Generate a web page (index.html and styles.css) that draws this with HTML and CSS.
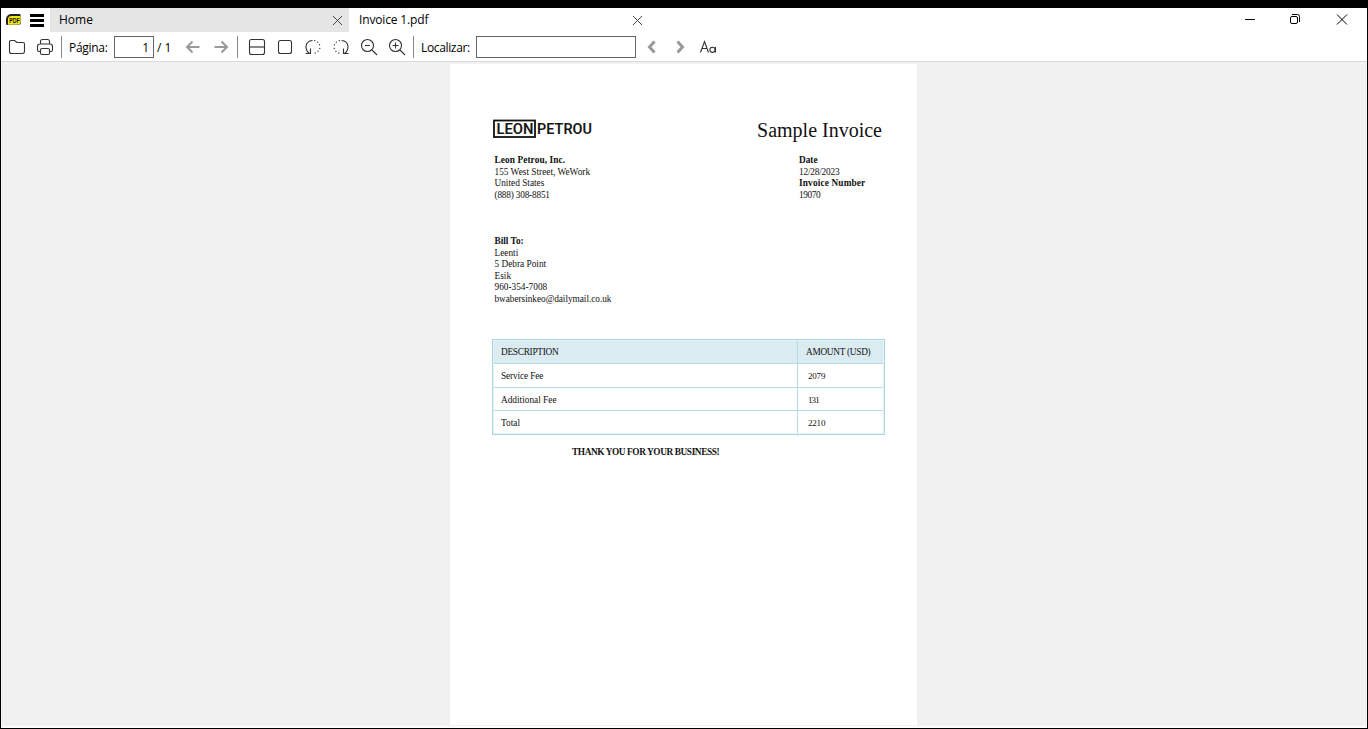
FILE: index.html
```
<!DOCTYPE html>
<html lang="pt">
<head>
<meta charset="utf-8">
<title>Invoice 1.pdf</title>
<link rel="stylesheet" href="styles.css">
</head>
<body>
<div class="window">
  <header class="tabs">
    <svg class="app-logo" width="16" height="12" viewBox="0 0 16 12"><path d="M0 11V5Q1 0 6 0H14L15 1V10Q14 11 12 11H3Z" fill="#777"/><path d="M0 10V5Q1 0 6 0H14V2H6Q2 2 2 6V11Z" fill="#222"/><path d="M2 10.500V5Q2.500 2 5.500 2H14.500V8Q14 10.500 11 10.500Z" fill="#f4e70a"/><text class="logo-pdf" x="3.200" y="9" textLength="10.500" lengthAdjust="spacingAndGlyphs">PDF</text></svg>
    <svg class="burger" width="14" height="13"><path d="M0 1.500H14M0 6.500H14M0 11.500H14" stroke="#000" stroke-width="3"/></svg>
    <div class="tab tab-home"><span class="home-label">Home</span><svg class="x" width="11" height="11"><path d="M1 1L10 10M10 1L1 10" /></svg></div>
    <div class="tab tab-file"><span class="file-label">Invoice 1.pdf</span><svg class="x" width="11" height="11"><path d="M1 1L10 10M10 1L1 10" /></svg></div>
    <div class="controls">
      <svg width="45" height="24"><path d="M17 11.500H27"/></svg>
      <svg width="46" height="24"><rect x="17.500" y="8.500" width="7" height="7" rx="1.500"/><path d="M19 6.500H24.500Q26.500 6.500 26.500 8.500V14"/></svg>
      <svg width="48" height="24"><path d="M18 6.500L28 16.500M28 6.500L18 16.500"/></svg>
    </div>
  </header>
  <nav class="toolbar">
    <svg class="ic" viewBox="0 0 28 28"><path d="M6.500 8.500Q6.500 7.500 8 7.500H11.500L14 9.500H20Q21.500 9.500 21.500 11V18Q21.500 20.500 19.500 20.500H8.500Q6.500 20.500 6.500 18.500Z"/></svg>
    <svg class="ic" viewBox="0 0 28 28"><path d="M9.500 11V8.500Q9.500 6.500 11.500 6.500H16.500Q18.500 6.500 18.500 8.500V11M9.500 18.500H8Q6.500 18.500 6.500 17V13.500Q6.500 11 9 11H19Q21.500 11 21.500 13.500V17Q21.500 18.500 20 18.500H18.500"/><rect x="9.500" y="15.500" width="9" height="6" rx="1.500"/></svg>
    <i class="sep sep-a"></i>
    <span class="label page-label">Página:</span>
    <span class="box page-box">1</span>
    <span class="label total">/ 1</span>
    <svg class="ic gray" viewBox="0 0 28 28"><path d="M20.500 14H8M13.500 8.500L8 14L13.500 19.500"/></svg>
    <svg class="ic gray" viewBox="0 0 28 28"><path d="M7.500 14H20M14.500 8.500L20 14L14.500 19.500"/></svg>
    <i class="sep sep-b"></i>
    <svg class="ic" viewBox="0 0 28 28"><rect x="6.500" y="6.500" width="15" height="15" rx="2"/><path class="mid" d="M7 14H21"/></svg>
    <svg class="ic" viewBox="0 0 28 28"><rect x="7.500" y="7.500" width="13" height="13" rx="2"/></svg>
    <svg class="ic" viewBox="0 0 28 28"><path d="M13.500 7.500Q7.500 8 7 13.500Q7 18 10.500 20.500M6.500 20.500H11.500V15.500"/><path class="dots" d="M15 7.500Q20.500 8.500 21 14Q20.500 19.500 14 20.500"/></svg>
    <svg class="ic" viewBox="0 0 28 28"><path d="M14.500 7.500Q20.500 8 21 13.500Q21 18 17.500 20.500M21.500 20.500H16.500V15.500"/><path class="dots" d="M13 7.500Q7.500 8.500 7 14Q7.500 19.500 14 20.500"/></svg>
    <svg class="ic" viewBox="0 0 28 28"><circle cx="12.500" cy="12.500" r="6"/><path d="M17 17L22 22M10 12.500H15"/></svg>
    <svg class="ic" viewBox="0 0 28 28"><circle cx="12.500" cy="12.500" r="6"/><path d="M17 17L22 22M9.500 12.500H15.500M12.500 9.500V15.500"/></svg>
    <i class="sep sep-c"></i>
    <span class="label find-label">Localizar:</span>
    <span class="box find-box"></span>
    <svg class="ic chev" viewBox="0 0 28 28"><path d="M16.500 8.500L11.500 14L16.500 19.500"/></svg>
    <svg class="ic chev" viewBox="0 0 28 28"><path d="M11.500 8.500L16.500 14L11.500 19.500"/></svg>
    <svg class="ic" viewBox="0 0 28 28"><path d="M6.500 19.500L10.500 8.500L14.500 19.500M8 15.500H13"/><circle cx="18.500" cy="16.800" r="2.600"/><path d="M21.500 14V19.500"/></svg>
  </nav>
  <main class="canvas">
    <article class="page">
      <div class="head">
        <svg class="brand" width="102" height="20" viewBox="0 0 102 20"><rect x="1" y="1.500" width="41" height="16.500"/><text x="3.500" y="15" textLength="37" lengthAdjust="spacingAndGlyphs">LEON</text><text x="44" y="15" textLength="55" lengthAdjust="spacingAndGlyphs">PETROU</text></svg>
        <h1>Sample Invoice</h1>
      </div>
      <div class="info">
        <div class="from">
          <b class="company">Leon Petrou, Inc.</b><span>155 West Street, WeWork</span><span>United States</span><span class="phone">(888) 308-8851</span>
        </div>
        <div class="meta">
          <b>Date</b><span class="date">12/28/2023</span><b class="number-label">Invoice Number</b><span class="number">19070</span>
        </div>
      </div>
      <div class="bill">
        <b>Bill To:</b><span>Leenti</span><span>5 Debra Point</span><span>Esik</span><span>960-354-7008</span><span class="email">bwabersinkeo@dailymail.co.uk</span>
      </div>
      <div class="table">
        <div class="row th"><span>DESCRIPTION</span><span>AMOUNT (USD)</span></div>
        <div class="row"><span class="service">Service Fee</span><span class="num">2079</span></div>
        <div class="row"><span>Additional Fee</span><span class="num tight">131</span></div>
        <div class="row"><span>Total</span><span class="num">2210</span></div>
      </div>
      <p class="thanks">THANK YOU FOR YOUR BUSINESS!</p>
    </article>
  </main>
</div>
</body>
</html>
```
FILE: styles.css
```
* { box-sizing: border-box; }
body { margin: 0; background: #000; font-family: "Open Sans", "Noto Sans", sans-serif; }
svg { display: block; flex: none; fill: none; }
.window { width: 1368px; height: 729px; padding: 8px 1px 1px; display: flex; flex-direction: column; overflow: hidden; }
.tabs { height: 24px; display: flex; align-items: center; background: #fff; font-size: 12px; color: #000; }
.app-logo { margin-left: 5px; }
.logo-pdf { font: bold 7px "Liberation Sans", sans-serif; fill: #111; }
.burger { margin: 0 6px 0 8px; }
.tab { width: 300px; height: 24px; display: flex; align-items: center; justify-content: space-between; padding: 0 7px 0 9px; line-height: 16px; }
.tab span { padding-bottom: 1px; }
.tab-home { width: 299px; padding-right: 6px; background: #e5e5e5; }
.tab-file { width: 301px; padding-left: 10px; }
.file-label { letter-spacing: -0.15px; }
.x { stroke: #444; stroke-width: 1; margin-top: 1px; }
.controls { display: flex; margin-left: auto; stroke: #000; }
.toolbar { height: 30px; display: flex; align-items: center; background: #fff; border-bottom: 1px solid #d9d9d9; padding-left: 2px; flex: none; }
.ic { width: 28px; height: 28px; stroke: #333; stroke-width: 1.1; }
.ic.gray { stroke: #999; stroke-width: 2; }
.ic.chev { stroke: #999; stroke-width: 3; }
.mid { stroke: #888; stroke-width: 2; }
.dots { stroke-dasharray: 1.2 2.2; }
.sep { width: 1px; height: 22px; background: #888; flex: none; }
.sep-a { margin: 0 7px 0 2px; }
.sep-b { margin: 0 5px 0 2px; }
.sep-c { margin: 0 7px 0 2px; }
.label { font-size: 12px; line-height: 16px; padding-top: 2px; white-space: nowrap; flex: none; }
.page-label { width: 45px; letter-spacing: -0.3px; }
.total { width: 22px; padding-left: 3px; }
.box { height: 22px; border: 1px solid #666; font-size: 12px; line-height: 22px; flex: none; }
.page-box { width: 40px; text-align: right; padding-right: 4px; }
.total + .ic { margin-left: 3px; }
.find-label { width: 55px; letter-spacing: -0.35px; }
.find-box { width: 160px; margin-right: 2px; }
.canvas { flex: 1; background: #f1f1f1; border-bottom: 2px solid #fff; padding: 2px 0 0 449px; }
.page { width: 467px; height: 661px; background: #fff; padding: 55px 32px 0 42px; font-family: "Liberation Serif", serif; font-size: 9.3px; color: #111; }
.head { display: flex; justify-content: space-between; height: 36px; padding-left: 1px; }
.brand rect { stroke: #111; stroke-width: 1.8; }
.brand text { font: 600 15.500px Roboto, sans-serif; fill: #181818; }
h1 { margin: 0 3px 0 0; font-weight: 400; font-size: 20px; line-height: 22px; white-space: nowrap; }
.info { display: flex; height: 81px; padding-left: 2.500px; }
.from, .meta, .bill { display: flex; flex-direction: column; line-height: 11.500px; white-space: nowrap; }
.from { width: 304.500px; }
.bill { height: 103px; padding-left: 2.500px; }
.company { letter-spacing: 0.09px; }
.phone, .date { letter-spacing: -0.2px; }
.number-label { letter-spacing: 0.15px; }
.number { letter-spacing: -0.4px; }
.email { letter-spacing: -0.04px; }
.service { letter-spacing: -0.12px; }
.table { height: 96px; border: 1px solid #a9d6df; outline: 1px solid #e4f3f6; outline-offset: -2px; }
.row { display: grid; grid-template-columns: 304px 1fr; height: 23.750px; line-height: 24.750px; border-bottom: 1px solid #b5dce3; }
.row:last-child { border-bottom: 0; }
.row span { padding-left: 8px; }
.row span + span { border-left: 1px solid #b5dce3; }
.row .num { padding-left: 10px; font-size: 9px; letter-spacing: -0.2px; }
.row .tight { letter-spacing: -0.9px; }
.th { background: #daecf2; letter-spacing: -0.28px; }
.thanks { margin: 11px 0 0 80px; font-weight: 700; line-height: 12px; letter-spacing: -0.4px; white-space: nowrap; }
```
